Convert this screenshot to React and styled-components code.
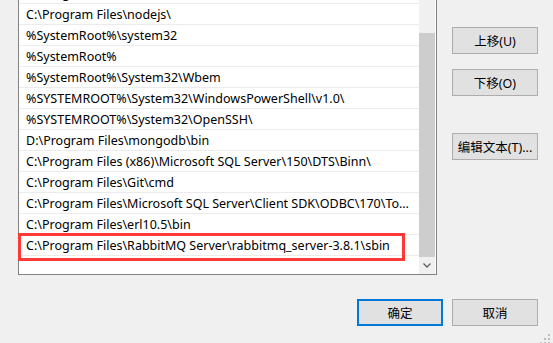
import React from 'react'
import styled, { createGlobalStyle } from 'styled-components'

const GlobalStyle = createGlobalStyle`
    html, body {
        margin : 0 ;
        padding : 0 ;
        background : #f0f0f0 ;
    }
`

const paths = [
    'C:\\Program Files\\dotnet\\',
    'C:\\Program Files\\nodejs\\',
    '%SystemRoot%\\system32',
    '%SystemRoot%',
    '%SystemRoot%\\System32\\Wbem',
    '%SYSTEMROOT%\\System32\\WindowsPowerShell\\v1.0\\',
    '%SYSTEMROOT%\\System32\\OpenSSH\\',
    'D:\\Program Files\\mongodb\\bin',
    'C:\\Program Files (x86)\\Microsoft SQL Server\\150\\DTS\\Binn\\',
    'C:\\Program Files\\Git\\cmd',
    'C:\\Program Files\\Microsoft SQL Server\\Client SDK\\ODBC\\170\\Tools\\Binn\\',
    'C:\\Program Files\\erl10.5\\bin',
    'C:\\Program Files\\RabbitMQ Server\\rabbitmq_server-3.8.1\\sbin',
]

function App() {
    return (
        <Dialog>
            <GlobalStyle />
            <Top>
                <ListBox>
                    <Rows>
                        {
                            paths.map((p , index) => (
                                <Row key={index}>{p}</Row>
                            ))
                        }
                    </Rows>
                    <ScrollBar>
                        <Track />
                        <Thumb />
                        <Arrow>
                            <svg width="8" height="5" viewBox="0 0 8 5">
                                <path d="M0.5 0.5 L4 4 L7.5 0.5" fill="none" stroke="#606060" strokeWidth="1.3" />
                            </svg>
                        </Arrow>
                    </ScrollBar>
                </ListBox>
                <Side>
                    <Button>上移(U)</Button>
                    <Button gap={15}>下移(O)</Button>
                    <Button gap={37}>编辑文本(T)...</Button>
                </Side>
            </Top>
            <Bottom>
                <Button primary>确定</Button>
                <Button>取消</Button>
            </Bottom>
            <Highlight />
            <Grip>
                <svg width="12" height="12" viewBox="0 0 12 12">
                    <rect x="9" y="1" width="2" height="2" fill="#bdbdbd" />
                    <rect x="5" y="5" width="2" height="2" fill="#bdbdbd" />
                    <rect x="9" y="5" width="2" height="2" fill="#bdbdbd" />
                    <rect x="1" y="9" width="2" height="2" fill="#bdbdbd" />
                    <rect x="5" y="9" width="2" height="2" fill="#bdbdbd" />
                    <rect x="9" y="9" width="2" height="2" fill="#bdbdbd" />
                </svg>
            </Grip>
        </Dialog>
    )
}

export default App

const Dialog = styled.div`
    position : relative ;
    width : 553px ;
    height : 343px ;
    overflow : hidden ;
    background : #f0f0f0 ;
    font-family : "Noto Sans" , "Noto Sans CJK SC" , sans-serif ;
    font-size : 13px ;
    color : #000 ;
`

const Top = styled.div`
    display : flex ;
    height : 275px ;
`

const ListBox = styled.div`
    margin-left : 18px ;
    width : 419px ;
    height : 275px ;
    box-sizing : border-box ;
    border : 1px solid #828282 ;
    border-top : none ;
    background : #fff ;
    display : flex ;
    overflow : hidden ;
`

const Rows = styled.div`
    width : 400px ;
    margin-top : -17px ;
`

const Row = styled.div`
    height : 21px ;
    line-height : 20px ;
    padding : 1px 6px 0 7px ;
    box-sizing : border-box ;
    border-bottom : 1px solid #ebebeb ;
    white-space : nowrap ;
    overflow : hidden ;
    text-overflow : ellipsis ;
    font-size : 12.5px ;
`

const ScrollBar = styled.div`
    width : 16px ;
    margin-right : 1px ;
    display : flex ;
    flex-direction : column ;
    background : #f0f0f0 ;
`

const Track = styled.div`
    height : 33px ;
`

const Thumb = styled.div`
    height : 224px ;
    background : #cdcdcd ;
`

const Arrow = styled.div`
    height : 17px ;
    display : flex ;
    align-items : center ;
    justify-content : center ;
`

const Side = styled.div`
    margin-left : 15px ;
    padding-top : 27px ;
    display : flex ;
    flex-direction : column ;
`

const Button = styled.div`
    width : 86px ;
    height : 27px ;
    box-sizing : border-box ;
    margin-top : ${props => props.gap ? props.gap + 'px' : '0'} ;
    background : #e1e1e1 ;
    border : ${props => props.primary ? '2px solid #0078d7' : '1px solid #adadad'} ;
    display : flex ;
    align-items : center ;
    justify-content : center ;
    font-size : 12.5px ;
    white-space : nowrap ;
`

const Bottom = styled.div`
    display : flex ;
    justify-content : flex-end ;
    gap : 9px ;
    padding : 24px 15px 0 0 ;
`

const Highlight = styled.div`
    position : absolute ;
    left : 18px ;
    top : 233px ;
    width : 387px ;
    height : 28px ;
    box-sizing : border-box ;
    border : 3px solid #ff3838 ;
`

const Grip = styled.div`
    position : absolute ;
    right : 2px ;
    bottom : 0 ;
    width : 12px ;
    height : 12px ;
`
